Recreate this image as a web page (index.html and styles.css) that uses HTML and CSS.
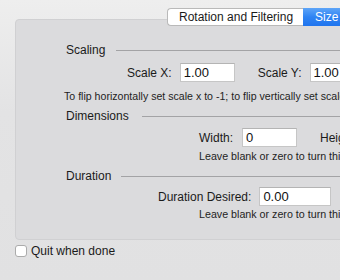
FILE: index.html
```html
<!DOCTYPE html>
<html lang="en">

<head>
    <meta charset="UTF-8">
    <title>Size Settings</title>
    <link rel="stylesheet" href="styles.css">
</head>

<body>
    <div class="window">
        <div class="tabs">
            <span class="tab">Rotation and Filtering</span>
            <span class="tab active">Size</span>
        </div>
        <div class="panel">
            <div class="group-title"><span>Scaling</span><i class="rule"></i></div>
            <div class="row row-scale">
                <label>Scale X:</label><input class="field" value="1.00">
                <label class="next">Scale Y:</label><input class="field" value="1.00">
            </div>
            <p class="hint hint-scale">To flip horizontally set scale x to -1; to flip vertically set scale y to -1.</p>

            <div class="group-title title-dim"><span>Dimensions</span><i class="rule"></i></div>
            <div class="row row-dim">
                <label>Width:</label><input class="field" value="0">
                <label class="next">Height:</label><input class="field" value="0">
            </div>
            <p class="hint hint-dim">Leave blank or zero to turn this off.</p>

            <div class="group-title title-dur"><span>Duration</span><i class="rule"></i></div>
            <div class="row row-dur">
                <label>Duration Desired:</label><input class="field field-wide" value="0.00">
                <label class="next">seconds</label>
            </div>
            <p class="hint hint-dur">Leave blank or zero to turn this off.</p>
        </div>
        <div class="quit">
            <span class="checkbox"></span>
            <span>Quit when done</span>
        </div>
    </div>
</body>

</html>
```

FILE: styles.css
```css
html,
body {
    margin: 0;
    padding: 0;
    overflow: hidden;
}

body {
    font-family: "Liberation Sans", Arial, sans-serif;
    font-size: 12px;
    color: #1a1a1a;
}

.window {
    width: 480px;
    height: 280px;
    padding-top: 8px;
    box-sizing: border-box;
    background: linear-gradient(#eeeeee, #e3e3e4 40%, #e1e1e2);
    white-space: nowrap;
}

.tabs {
    display: flex;
    margin-left: 167px;
    height: 18px;
    position: relative;
    z-index: 1;
}

.tab {
    display: flex;
    align-items: center;
    padding: 0 10px 0 11px;
    background-color: #ffffff;
    border: 1px solid #b9b9b9;
    border-right: none;
    border-radius: 4px 0 0 4px;
    box-sizing: border-box;
    font-size: 12px;
}

.tab.active {
    padding: 0 12px;
    color: #ffffff;
    border: none;
    border-radius: 0 4px 4px 0;
    background: linear-gradient(#5ea5f8, #2f84f3 50%, #1f74ee);
}

.panel {
    margin: -7px 0 0 15px;
    width: 440px;
    height: 221px;
    box-sizing: border-box;
    padding-top: 22px;
    background-color: #dbdbdd;
    border: 1px solid #d0d0d2;
    border-radius: 4px;
}

.group-title {
    display: flex;
    align-items: center;
    height: 16px;
    padding-left: 50px;
}

.rule {
    flex: 1;
    height: 1px;
    margin-left: 11px;
    background-color: #a3a3a5;
}

.title-dim {
    margin-top: 6px;
}

.title-dim .rule {
    margin-left: 13px;
}

.title-dur {
    margin-top: 6px;
}

.title-dur .rule {
    margin-left: 10px;
}

.row {
    display: flex;
    align-items: center;
    height: 19px;
}

.row label {
    margin-right: 8px;
}

.row .next {
    margin-left: 23px;
}

.field {
    width: 55px;
    height: 19px;
    box-sizing: border-box;
    padding: 0 3px;
    margin: 0;
    border: 1px solid #c6c6c6;
    border-top-color: #b4b4b4;
    background-color: #ffffff;
    font-family: "Liberation Sans", Arial, sans-serif;
    font-size: 13px;
    color: #111;
}

.field-wide {
    width: 72px;
}

.row-scale {
    margin-top: 5px;
    padding-left: 111px;
}

.row-dim {
    margin-top: 4px;
    padding-left: 183px;
}

.row-dim label {
    margin-right: 9px;
}

.row-dur {
    margin-top: 3px;
    padding-left: 142px;
}

.hint {
    margin: 0;
    height: 12px;
    line-height: 12px;
    font-size: 10.7px;
    color: #1e1e1e;
}

.hint-scale {
    margin-top: 8px;
    padding-left: 48px;
    font-size: 10.6px;
}

.hint-dim {
    margin-top: 3px;
    padding-left: 183px;
}

.hint-dur {
    margin-top: 2px;
    padding-left: 183px;
}

.quit {
    display: flex;
    align-items: center;
    margin: 5px 0 0 15px;
    height: 12px;
    font-size: 12px;
}

.checkbox {
    width: 12px;
    height: 12px;
    box-sizing: border-box;
    margin-right: 4px;
    background-color: #ffffff;
    border: 1px solid #ababab;
    border-radius: 3px;
}
```
